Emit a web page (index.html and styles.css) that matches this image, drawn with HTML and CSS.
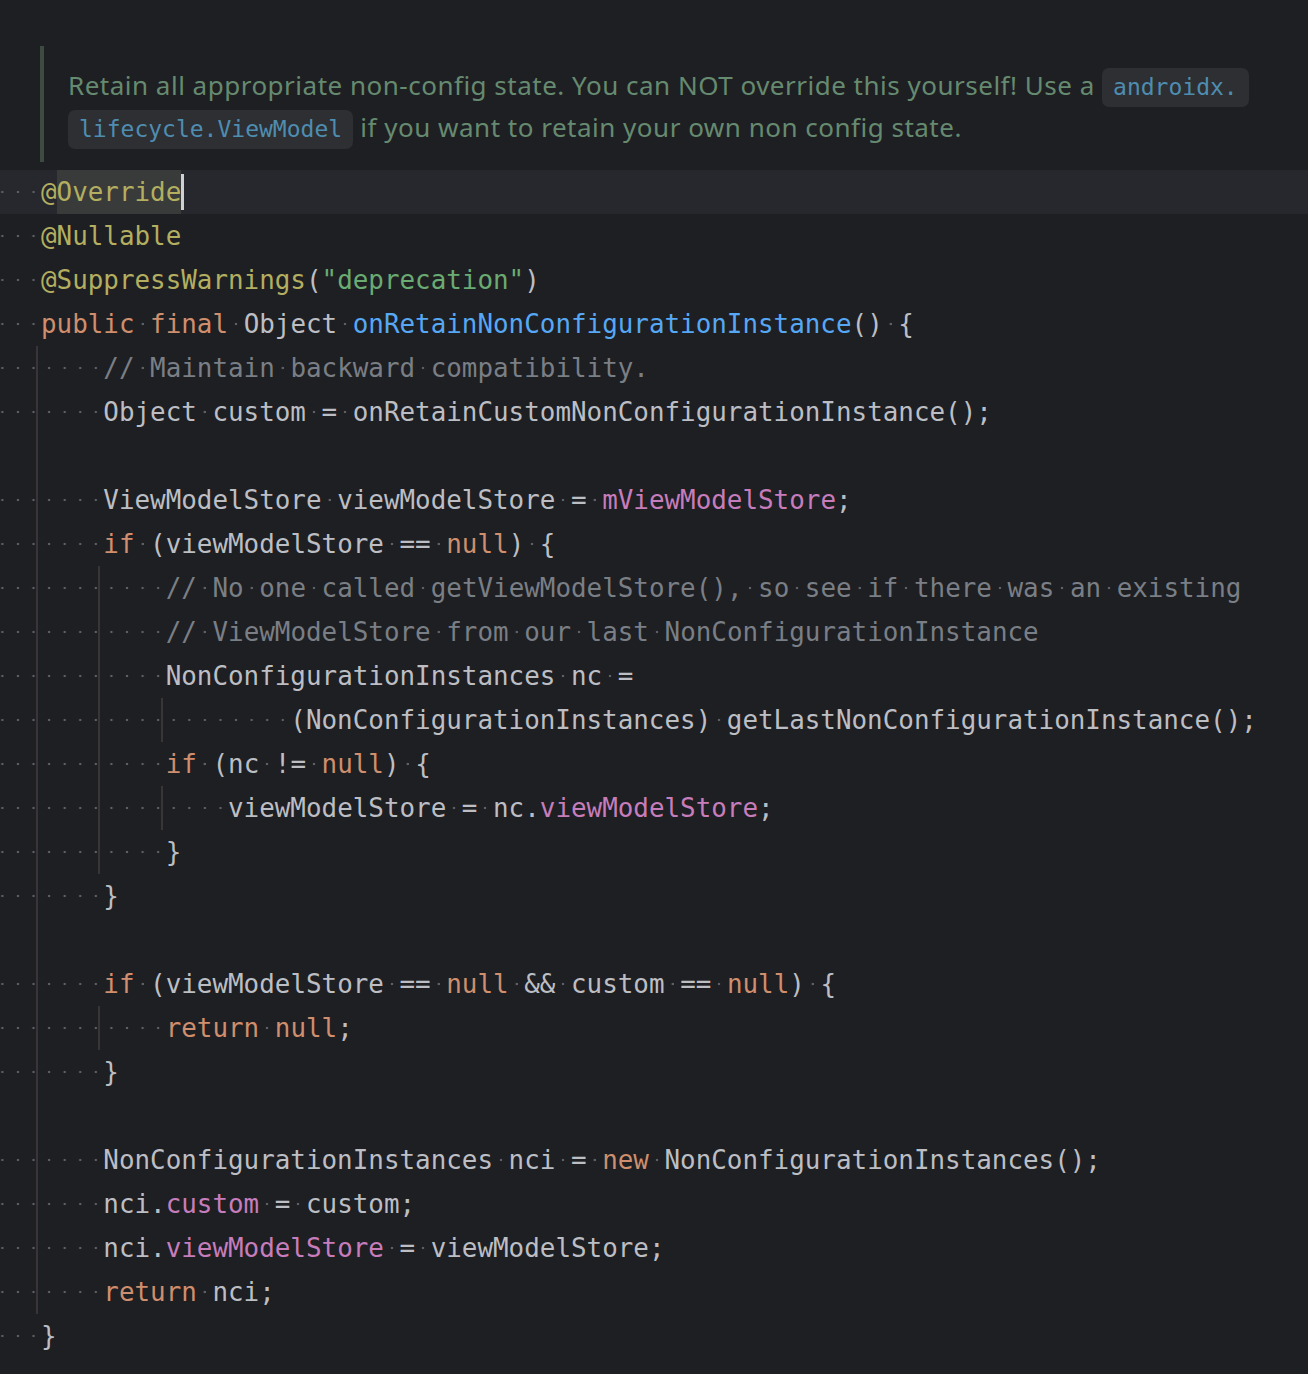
FILE: index.html
```html
<!DOCTYPE html>
<html lang="en">
<head>
<meta charset="utf-8">
<title>onRetainNonConfigurationInstance</title>
<link rel="stylesheet" href="styles.css">
</head>
<body>
<div class="editor">
  <div class="doc">
    <p class="doc-line">Retain all appropriate non-config state. You can NOT override this yourself! Use a <code class="chip">androidx.<br>lifecycle.ViewModel</code> if you want to retain your own non config state.</p>
  </div>
  <div class="code">
    <div class="line current"><span class="w">    </span><span class="an">@</span><span class="an hl">Override</span><span class="caret"></span></div>
    <div class="line"><span class="w">    </span><span class="an">@Nullable</span></div>
    <div class="line"><span class="w">    </span><span class="an">@SuppressWarnings</span>(<span class="st">"deprecation"</span>)</div>
    <div class="line"><span class="w">    </span><span class="kw">public</span><span class="w"> </span><span class="kw">final</span><span class="w"> </span>Object<span class="w"> </span><span class="fn">onRetainNonConfigurationInstance</span>()<span class="w"> </span>{</div>
    <div class="blk g4">
      <div class="line"><span class="w">        </span><span class="cm">//<span class="w"> </span>Maintain<span class="w"> </span>backward<span class="w"> </span>compatibility.</span></div>
      <div class="line"><span class="w">        </span>Object<span class="w"> </span>custom<span class="w"> </span>=<span class="w"> </span>onRetainCustomNonConfigurationInstance();</div>
      <div class="line"></div>
      <div class="line"><span class="w">        </span>ViewModelStore<span class="w"> </span>viewModelStore<span class="w"> </span>=<span class="w"> </span><span class="fd">mViewModelStore</span>;</div>
      <div class="line"><span class="w">        </span><span class="kw">if</span><span class="w"> </span>(viewModelStore<span class="w"> </span>==<span class="w"> </span><span class="kw">null</span>)<span class="w"> </span>{</div>
      <div class="blk g8">
        <div class="line"><span class="w">            </span><span class="cm">//<span class="w"> </span>No<span class="w"> </span>one<span class="w"> </span>called<span class="w"> </span>getViewModelStore(),<span class="w"> </span>so<span class="w"> </span>see<span class="w"> </span>if<span class="w"> </span>there<span class="w"> </span>was<span class="w"> </span>an<span class="w"> </span>existing</span></div>
        <div class="line"><span class="w">            </span><span class="cm">//<span class="w"> </span>ViewModelStore<span class="w"> </span>from<span class="w"> </span>our<span class="w"> </span>last<span class="w"> </span>NonConfigurationInstance</span></div>
        <div class="line"><span class="w">            </span>NonConfigurationInstances<span class="w"> </span>nc<span class="w"> </span>=</div>
        <div class="blk g12">
          <div class="line"><span class="w">                    </span>(NonConfigurationInstances)<span class="w"> </span>getLastNonConfigurationInstance();</div>
        </div>
        <div class="line"><span class="w">            </span><span class="kw">if</span><span class="w"> </span>(nc<span class="w"> </span>!=<span class="w"> </span><span class="kw">null</span>)<span class="w"> </span>{</div>
        <div class="blk g12">
          <div class="line"><span class="w">                </span>viewModelStore<span class="w"> </span>=<span class="w"> </span>nc.<span class="fd">viewModelStore</span>;</div>
        </div>
        <div class="line"><span class="w">            </span>}</div>
      </div>
      <div class="line"><span class="w">        </span>}</div>
      <div class="line"></div>
      <div class="line"><span class="w">        </span><span class="kw">if</span><span class="w"> </span>(viewModelStore<span class="w"> </span>==<span class="w"> </span><span class="kw">null</span><span class="w"> </span>&amp;&amp;<span class="w"> </span>custom<span class="w"> </span>==<span class="w"> </span><span class="kw">null</span>)<span class="w"> </span>{</div>
      <div class="blk g8">
        <div class="line"><span class="w">            </span><span class="kw">return</span><span class="w"> </span><span class="kw">null</span>;</div>
      </div>
      <div class="line"><span class="w">        </span>}</div>
      <div class="line"></div>
      <div class="line"><span class="w">        </span>NonConfigurationInstances<span class="w"> </span>nci<span class="w"> </span>=<span class="w"> </span><span class="kw">new</span><span class="w"> </span>NonConfigurationInstances();</div>
      <div class="line"><span class="w">        </span>nci.<span class="fd">custom</span><span class="w"> </span>=<span class="w"> </span>custom;</div>
      <div class="line"><span class="w">        </span>nci.<span class="fd">viewModelStore</span><span class="w"> </span>=<span class="w"> </span>viewModelStore;</div>
      <div class="line"><span class="w">        </span><span class="kw">return</span><span class="w"> </span>nci;</div>
    </div>
    <div class="line"><span class="w">    </span>}</div>
  </div>
</div>
</body>
</html>
```
FILE: styles.css
```css
html, body {
  margin: 0;
  padding: 0;
  background: #1e1f22;
}

body {
  width: 1308px;
  height: 1374px;
  overflow: hidden;
}

.editor {
  padding-top: 46px;
}

.doc {
  margin: 0 0 8px 40px;
  border-left: 4px solid #3e4b40;
  padding: 18px 0 14px 24px;
}

.doc-line {
  margin: 0;
  font-family: "Noto Sans", "Liberation Sans", sans-serif;
  font-size: 26px;
  letter-spacing: 0.5px;
  line-height: 42px;
  color: #668a70;
  white-space: nowrap;
}

.chip {
  font-family: "DejaVu Sans Mono", monospace;
  font-size: 23px;
  line-height: 1;
  letter-spacing: 0;
  color: #4f8db0;
  background: #2d2f33;
  border-radius: 7px;
  padding: 6px 11px 7px;
  -webkit-box-decoration-break: clone;
  box-decoration-break: clone;
}

.code {
  margin-left: -21.4px;
  font-family: "DejaVu Sans Mono", monospace;
  font-size: 25.9px;
  color: #bcbec4;
}

.line {
  height: 44px;
  line-height: 44px;
  white-space: pre;
}

.line.current {
  background: #26282d;
}

.blk {
  position: relative;
}

.blk::before {
  content: "";
  position: absolute;
  top: 0;
  bottom: 0;
  width: 2px;
  background: #393536;
}

.g4::before { left: calc(4ch - 5px); }
.g8::before { left: calc(8ch - 5px); }
.g12::before { left: calc(12ch - 5px); }

.w {
  background-image: radial-gradient(circle at center, #5d6066 0, #5d6066 1px, rgba(93, 96, 102, 0) 1.6px);
  background-size: 1ch 100%;
  background-repeat: repeat-x;
  background-position: 0 55%;
}

.an { color: #b3ae60; }
.kw { color: #cf8e6d; }
.fn { color: #56a8f5; }
.st { color: #6aab73; }
.cm { color: #7a7e85; }
.fd { color: #c77dbb; }

.hl {
  display: inline-block;
  vertical-align: top;
  height: 44px;
  background: #383b39;
}

.caret {
  display: inline-block;
  vertical-align: top;
  width: 3px;
  height: 36px;
  margin-top: 4px;
  background: #cfd0d3;
}
```
